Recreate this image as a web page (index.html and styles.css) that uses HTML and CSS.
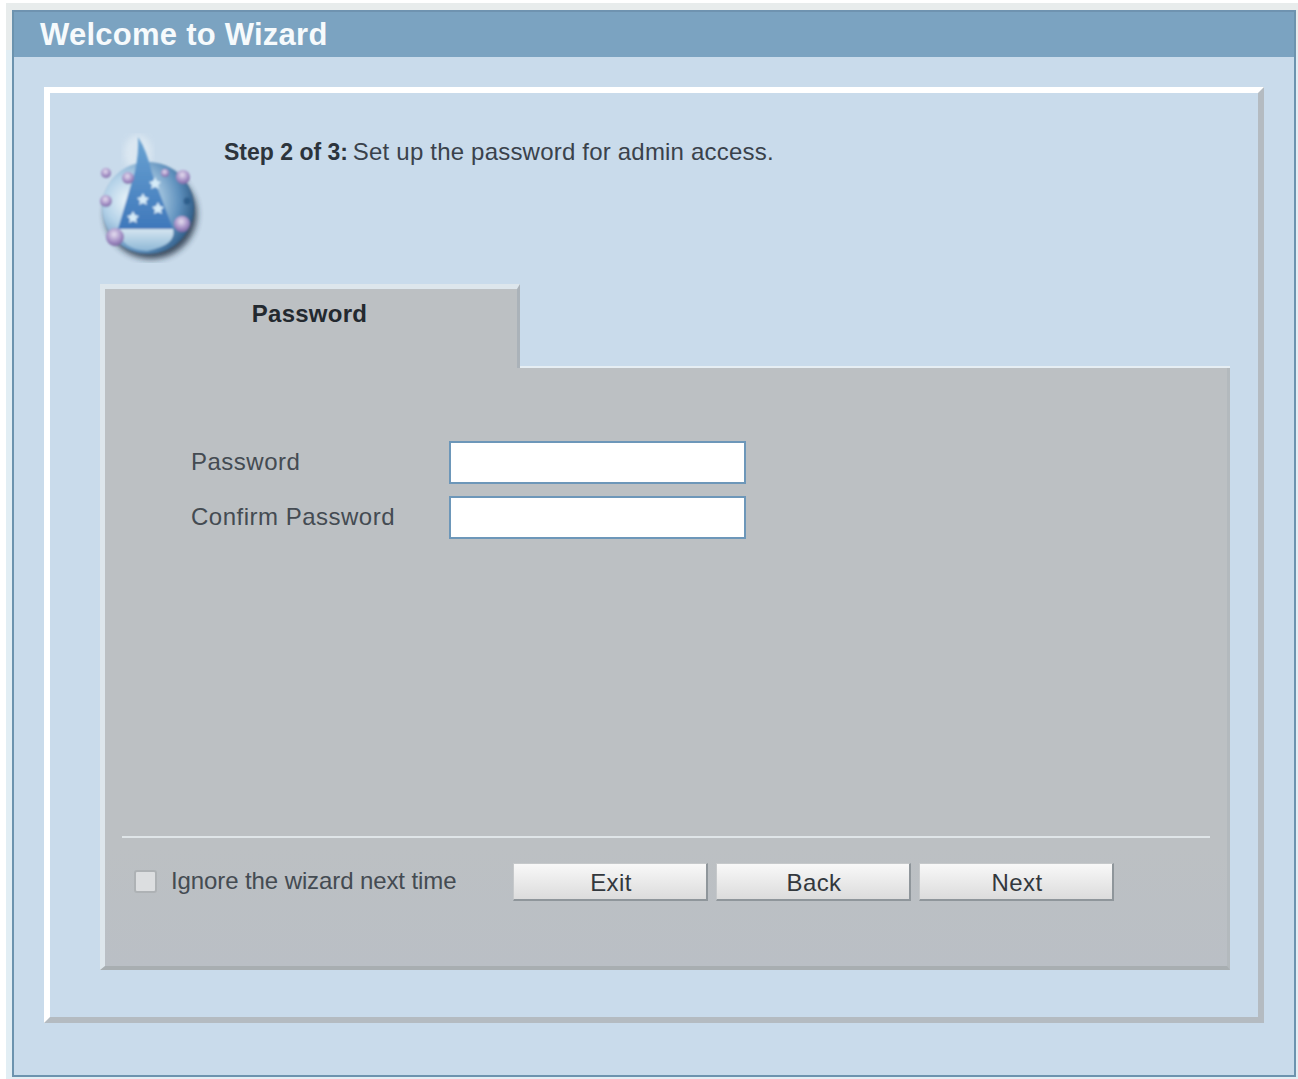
FILE: index.html
```html
<!DOCTYPE html>
<html lang="en">
<head>
    <meta charset="utf-8">
    <title>Welcome to Wizard</title>
    <link rel="stylesheet" href="styles.css">
</head>
<body>
<div class="page">
    <div class="panel">
        <h1 class="panel-title">Welcome to Wizard</h1>
        <div class="wizard-box">
            <div class="intro">
                <svg class="wizard-icon" viewBox="0 0 110 130">
                    <defs>
                        <radialGradient id="ball" cx="0.3" cy="0.42" r="0.78">
                            <stop offset="0" stop-color="#eef6fb"/>
                            <stop offset="0.35" stop-color="#b4d2e8"/>
                            <stop offset="0.7" stop-color="#5d8fbc"/>
                            <stop offset="1" stop-color="#1f4a74"/>
                        </radialGradient>
                        <linearGradient id="hat" x1="0" y1="0" x2="0" y2="1">
                            <stop offset="0" stop-color="#6aa3d2"/>
                            <stop offset="1" stop-color="#3f78bb"/>
                        </linearGradient>
                        <linearGradient id="lower" x1="0" y1="0" x2="0" y2="1">
                            <stop offset="0" stop-color="#d5e6f0"/>
                            <stop offset="1" stop-color="#8db7d6"/>
                        </linearGradient>
                        <radialGradient id="bead" cx="0.45" cy="0.35" r="0.7">
                            <stop offset="0" stop-color="#e6dff0"/>
                            <stop offset="0.55" stop-color="#a995c9"/>
                            <stop offset="1" stop-color="#75609f"/>
                        </radialGradient>
                        <filter id="soft"><feGaussianBlur stdDeviation="0.8"/></filter>
                        <filter id="blur"><feGaussianBlur stdDeviation="3"/></filter>
                    </defs>
                    <ellipse cx="43" cy="20" rx="14" ry="18" fill="#e3edf4" opacity="0.7" filter="url(#blur)"/>
                    <ellipse cx="56" cy="81" rx="46" ry="45" fill="#1c2c3c" opacity="0.8" filter="url(#blur)"/>
                    <g filter="url(#soft)">
                        <circle cx="53" cy="75" r="46" fill="url(#ball)"/>
                        <path d="M23 96 L78 96 Q82 112 52 118 Q26 116 23 96 Z" fill="url(#lower)"/>
                        <path d="M43 4 Q52 18 57 40 L78 96 L23 96 L40 38 Q44 20 43 4 Z" fill="url(#hat)"/>
                        <g fill="#d6ebf8">
                            <path d="M49 52 l2 4 4 1 -3 3 1 4 -4 -2 -4 2 1 -4 -3 -3 4 -1 Z" transform="translate(-1 8)"/>
                            <path d="M49 52 l2 4 4 1 -3 3 1 4 -4 -2 -4 2 1 -4 -3 -3 4 -1 Z" transform="translate(11 -8)"/>
                            <path d="M49 52 l2 4 4 1 -3 3 1 4 -4 -2 -4 2 1 -4 -3 -3 4 -1 Z" transform="translate(14 17)"/>
                            <path d="M49 52 l2 4 4 1 -3 3 1 4 -4 -2 -4 2 1 -4 -3 -3 4 -1 Z" transform="translate(-11 26)"/>
                        </g>
                        <g fill="url(#bead)">
                            <circle cx="11" cy="40" r="5"/>
                            <circle cx="33" cy="45" r="6"/>
                            <circle cx="70" cy="40" r="4"/>
                            <circle cx="88" cy="44" r="7"/>
                            <circle cx="11" cy="68" r="6"/>
                            <circle cx="87" cy="91" r="8"/>
                            <circle cx="20" cy="104" r="9"/>
                        </g>
                        <circle cx="92" cy="68" r="3.5" fill="#2f5f8c"/>
                    </g>
                </svg>
                <p class="step-text"><b>Step 2 of 3:</b> Set up the password for admin access.</p>
            </div>
            <div class="tab-row">
                <div class="tab">Password</div>
                <div class="tab-rest"></div>
            </div>
            <form class="tab-body">
                <div class="fields">
                    <label for="pw">Password</label>
                    <input id="pw" class="field" type="password">
                    <label for="pw2">Confirm Password</label>
                    <input id="pw2" class="field" type="password">
                </div>
                <div class="footer">
                    <label class="ignore">
                        <span class="checkbox"></span>
                        Ignore the wizard next time
                    </label>
                    <div class="buttons">
                        <button type="button" class="btn">Exit</button>
                        <button type="button" class="btn">Back</button>
                        <button type="button" class="btn">Next</button>
                    </div>
                </div>
            </form>
        </div>
    </div>
</div>
</body>
</html>
```

FILE: styles.css
```css
body {
    margin: 0;
    background: #fff;
    font-family: "Liberation Sans", Arial, sans-serif;
    color: #3a424b;
}
.page {
    margin: 3px 0 0 6px;
    padding: 7px 0 2px 6px;
    width: 1292px;
    box-sizing: border-box;
    background: linear-gradient(#e8ecec, #e8ecec 47px, #e2eef4 47px);
}
.panel {
    width: 1284px;
    height: 1067px;
    box-sizing: border-box;
    border: 2px solid #6c93ae;
    border-top-color: #6f93b0;
    background: #c9dbeb;
}
.panel-title {
    margin: 0;
    height: 45px;
    padding-left: 26px;
    background: #7ba3c1;
    color: #f6fafc;
    font-size: 31px;
    line-height: 45px;
    letter-spacing: 0.25px;
    font-weight: bold;
}
.wizard-box {
    width: 1220px;
    height: 936px;
    box-sizing: border-box;
    margin: 30px 0 0 30px;
    padding: 0 28px 0 50px;
    border: 6px solid;
    border-color: #fff #b4bbc1 #b4bbc1 #fff;
}
.intro {
    display: flex;
    height: 191px;
    box-sizing: border-box;
    margin-left: -5px;
    padding-top: 40px;
}
.wizard-icon {
    width: 110px;
    height: 130px;
    flex: none;
}
.step-text {
    margin: 5px 0 0 19px;
    font-size: 24px;
    line-height: 28px;
    letter-spacing: 0.2px;
    color: #3a424b;
}
.step-text b {
    margin-right: -2px;
    font-size: 23px;
    letter-spacing: 0;
    color: #2c343c;
}
.tab-row {
    display: flex;
    height: 84px;
}
.tab {
    width: 420px;
    box-sizing: border-box;
    padding: 11px 3px 0 0;
    border: solid;
    border-width: 5px 3px 0 5px;
    border-color: #dde6ec #aab2b9 #bcc0c3 #dde6ec;
    background: #bcc0c3;
    text-align: center;
    font-size: 24px;
    line-height: 28px;
    letter-spacing: 0.25px;
    font-weight: bold;
    color: #23292f;
}
.tab-rest {
    flex: 1;
    border-bottom: 2px solid #e6eef3;
}
.tab-body {
    display: flex;
    flex-direction: column;
    height: 602px;
    box-sizing: border-box;
    padding: 73px 17px 0;
    border: solid;
    border-width: 0 3px 4px 5px;
    border-color: #bcc0c3 #b3b9bd #a8aeb1 #dde6ec;
    background: linear-gradient(#bcc0c3, #bcc0c3 80%, #babfc5);
}
.fields {
    display: grid;
    grid-template-columns: 258px 297px;
    row-gap: 12px;
    padding-left: 69px;
    font-size: 24px;
    line-height: 26px;
    letter-spacing: 0.5px;
    color: #444b52;
    align-items: center;
}
.fields label {
    margin-top: -2px;
}
.field {
    height: 43px;
    box-sizing: border-box;
    border: 2px solid #6d97b9;
    background: #fff;
}
.footer {
    display: flex;
    align-items: flex-start;
    margin-top: auto;
    padding: 25px 0 65px 12px;
    border-top: 2px solid #dfe5e8;
    font-size: 24px;
    letter-spacing: -0.1px;
    color: #444b52;
}
.ignore {
    display: flex;
    align-items: center;
    gap: 14px;
    width: 379px;
    height: 36px;
}
.checkbox {
    width: 23px;
    height: 23px;
    box-sizing: border-box;
    border: 2px solid #aeb2b5;
    border-radius: 3px;
    background: #dcdee0;
}
.buttons {
    display: flex;
    gap: 8px;
}
.btn {
    width: 195px;
    height: 38px;
    padding: 2px 0 0 2px;
    border: solid;
    border-width: 1px 2px 2px 1px;
    border-color: #c6c9cb #8f969b #8f969b #c6c9cb;
    background: linear-gradient(#f8f8f8, #dcdcdc);
    font-family: "Liberation Sans", Arial, sans-serif;
    font-size: 24px;
    letter-spacing: 0.4px;
    color: #33383d;
}
```
